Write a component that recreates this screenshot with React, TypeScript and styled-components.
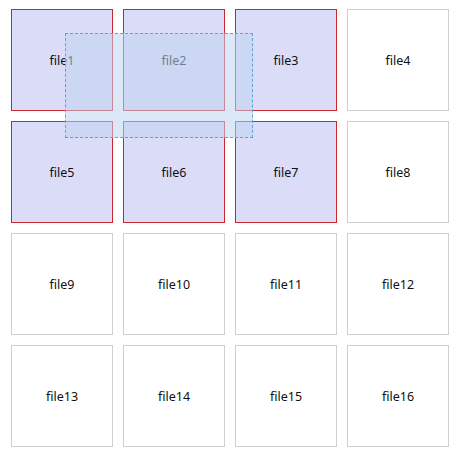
import React from 'react';
import styled, { createGlobalStyle } from 'styled-components';

const GlobalStyle = createGlobalStyle`
  html, body {
    margin: 0;
    padding: 0;
    background: #fff;
  }
  body {
    font-family: 'Noto Sans', 'Liberation Sans', sans-serif;
  }
`;

const Page = styled.div`
  padding: 9px 0 0 11px;
`;

const Grid = styled.div`
  position: relative;
  display: grid;
  grid-template-columns: repeat(4, 102px);
  grid-auto-rows: 102px;
  gap: 10px;
`;

const Tile = styled.div<{ selected: boolean }>`
  box-sizing: border-box;
  display: flex;
  align-items: center;
  justify-content: center;
  border: 1px solid ${({ selected }) => (selected ? '#c9262e' : '#cfcfcf')};
  background: ${({ selected }) => (selected ? '#dbdcf7' : '#fff')};
  color: #111;
  font-size: 12.5px;
`;

const SelectionBox = styled.div`
  position: absolute;
  left: 54px;
  top: 24px;
  width: 188px;
  height: 105px;
  box-sizing: border-box;
  border: 1px dashed #5aa4e0;
  background: rgba(192, 214, 240, 0.55);
`;

const files = Array.from({ length: 16 }, (_, i) => `file${i + 1}`);
const selectedFiles = new Set([0, 1, 2, 4, 5, 6]);

export default function App() {
  return (
    <Page>
      <GlobalStyle />
      <Grid>
        {files.map((name, i) => (
          <Tile key={name} selected={selectedFiles.has(i)}>
            {name}
          </Tile>
        ))}
        <SelectionBox />
      </Grid>
    </Page>
  );
}
